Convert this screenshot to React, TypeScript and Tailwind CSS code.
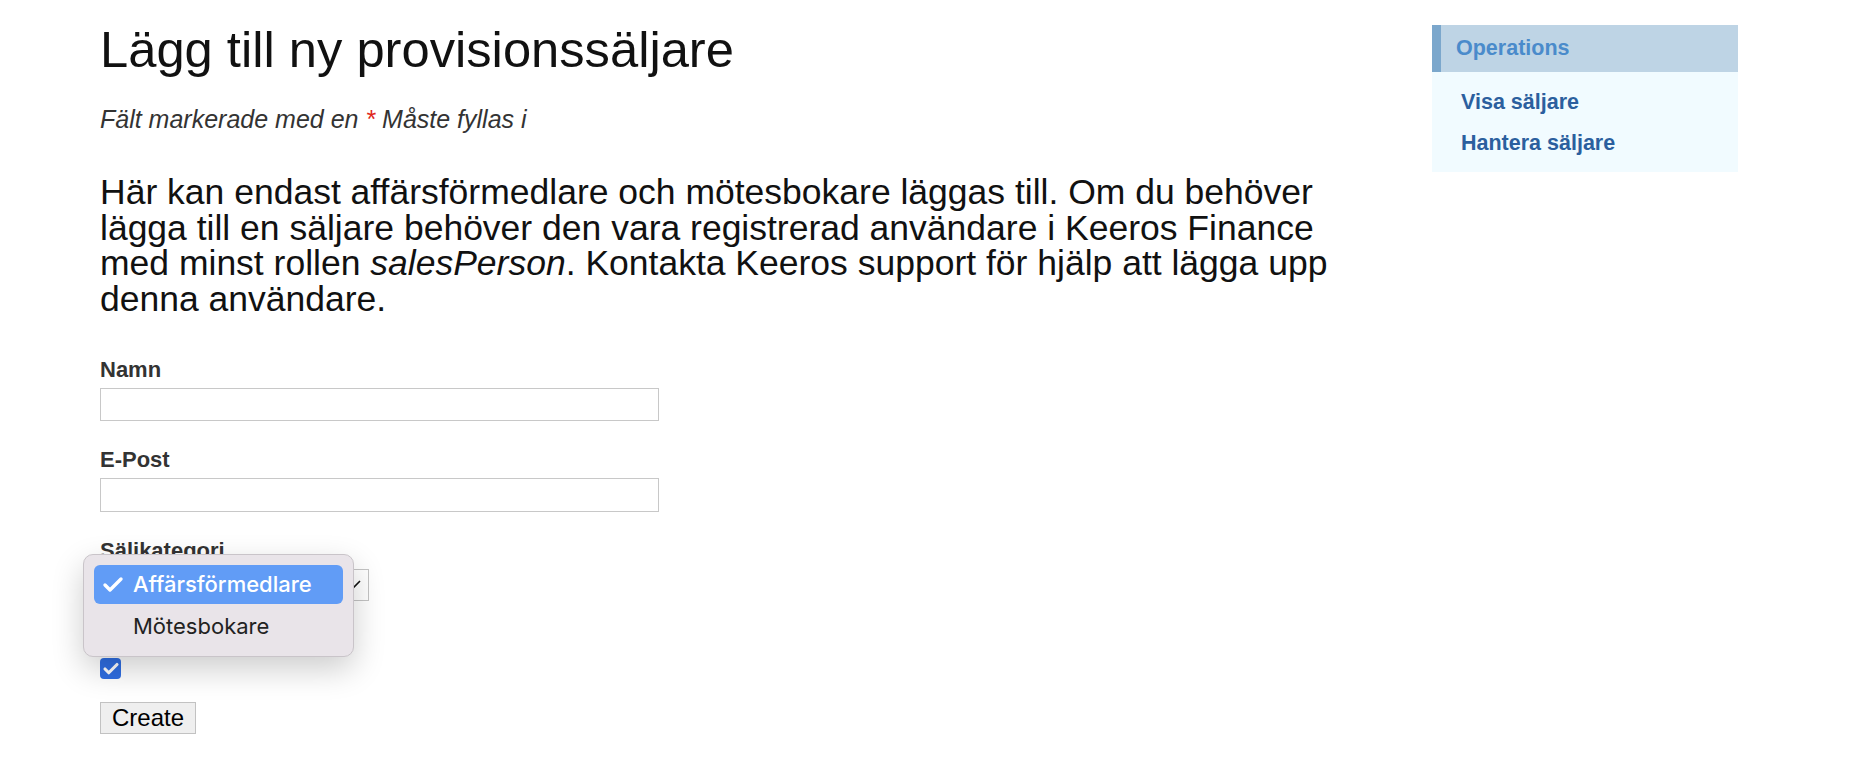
import { Check } from "lucide-react";

const sans = "font-['Liberation_Sans',Arial,sans-serif]";

function Field({ label, children }: { label: string; children: React.ReactNode }) {
  return (
    <div className="mb-[28px]">
      <div className="text-[22px] font-bold leading-[22px] text-[#333]">{label}</div>
      <div className="mt-[7px]">{children}</div>
    </div>
  );
}

function CategoryPopup() {
  return (
    <div className="absolute left-[-17px] top-[-15px] z-10 w-[271px] rounded-[10px] border border-[#c9c4c9] bg-[#e9e4e9] px-[10px] py-[10px] font-['Inter',sans-serif] shadow-[0_12px_32px_rgba(0,0,0,0.2)]">
      <div className="flex h-[39px] items-center rounded-[6px] bg-[#619cf6] pl-[7px] text-[22px] font-medium text-white">
        <Check className="mr-[8px] h-[24px] w-[24px]" strokeWidth={3.4} />
        Affärsförmedlare
      </div>
      <div className="mt-[3px] flex h-[39px] items-center pl-[39px] text-[22px] text-[#222]">Mötesbokare</div>
    </div>
  );
}

export default function App() {
  return (
    <div className={`flex min-h-screen bg-white pl-[100px] ${sans}`}>
      <main className="w-[1260px]">
        <h1 className="mt-[25px] text-[50.7px] leading-[50px] text-[#111]">Lägg till ny provisionssäljare</h1>
        <p className="mt-[32px] text-[25px] italic leading-[24px] text-[#333]">
          Fält markerade med en <span className="text-[#e0261b]">*</span> Måste fyllas i
        </p>
        <p className="mt-[44px] text-[35.5px] leading-[35.6px] text-[#111]">
          Här kan endast affärsförmedlare och mötesbokare läggas till. Om du behöver lägga till en säljare behöver den
          vara registrerad användare i Keeros Finance med minst rollen <em>salesPerson</em>. Kontakta Keeros support för
          hjälp att lägga upp denna användare.
        </p>

        <form className="mt-[42px]">
          <Field label="Namn">
            <div className="h-[33px] w-[559px] border border-[#c8c8c8] bg-white" />
          </Field>
          <Field label="E-Post">
            <div className="h-[34px] w-[559px] border border-[#c8c8c8] bg-white" />
          </Field>
          <Field label="Säljkategori">
            <div className="relative">
              <div className="flex h-[32px] w-[269px] items-center justify-end border border-[#c4c4c4] bg-white pr-[6px]">
                <svg width="18" height="12" viewBox="0 0 18 12" className="mr-[1px]">
                  <path d="M1 2 L9 10 L17 2" fill="none" stroke="#111" strokeWidth="1.6" />
                </svg>
              </div>
              <CategoryPopup />
            </div>
          </Field>
          <div>
            <div className="text-[22px] font-bold leading-[22px] text-[#333]">Aktiv</div>
            <div className="mt-[7px] flex h-[21px] w-[21px] items-center justify-center rounded-[4px] bg-[#2f6ee2]">
              <Check className="h-[18px] w-[18px] text-white" strokeWidth={4.2} />
            </div>
          </div>
          <button
            type="button"
            className="mt-[23px] h-[32px] border border-[#c2c2c2] bg-[#efefef] px-[11px] text-[24px] leading-[24px] text-black"
          >
            Create
          </button>
        </form>
      </main>

      <aside className="mt-[25px] ml-[72px] h-[147px] w-[306px] bg-[#f1fbff]">
        <div className="flex h-[47px] items-center border-l-[9px] border-[#7ba7cc] bg-[#bed4e5] pl-[15px] text-[21.5px] font-bold text-[#4a8bcb]">
          Operations
        </div>
        <ul className="pt-[17px] pl-[29px] text-[21.5px] font-bold text-[#2b5f9e]">
          <li className="h-[41px] leading-[26px]">Visa säljare</li>
          <li className="leading-[26px]">Hantera säljare</li>
        </ul>
      </aside>
    </div>
  );
}
